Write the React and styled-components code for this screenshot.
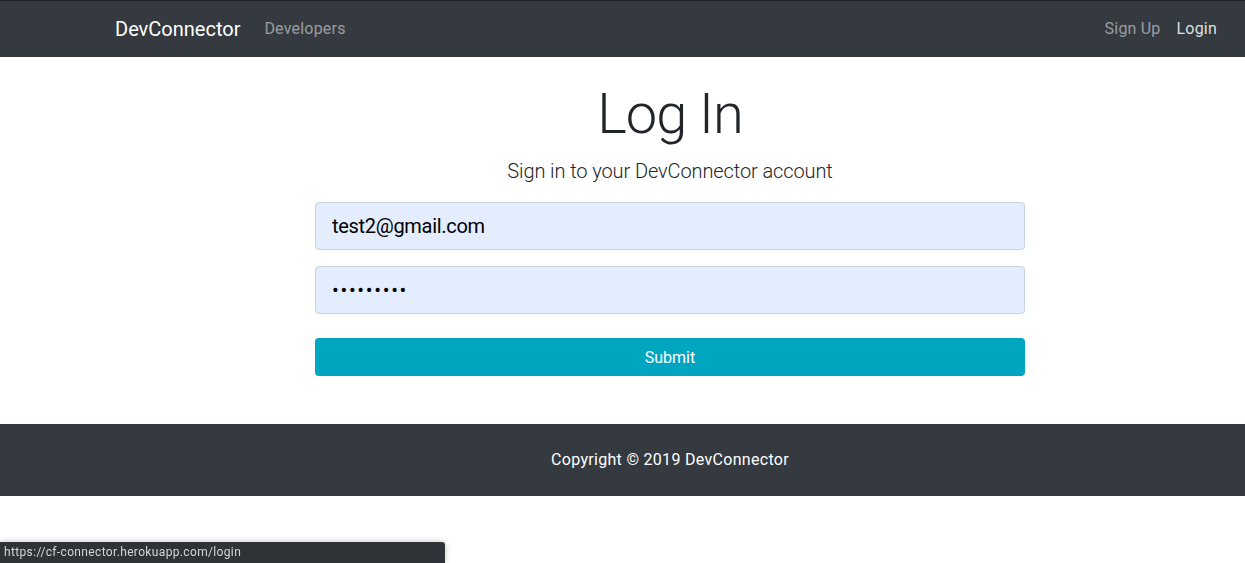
import styled, { createGlobalStyle } from "styled-components";

const Global = createGlobalStyle`
    html, body {
        margin: 0;
        padding: 0;
        overflow: hidden;
        background: #fff;
    }
    body {
        font-family: Roboto, "Noto Sans", "Liberation Sans", sans-serif;
        color: #212529;
        font-size: 16px;
        line-height: 1.5;
    }
`

// the shot is cropped from a wider window, so the bootstrap container sits at 100px
const Container = styled.div`
    width: 1140px;
    margin-left: 100px;
    padding: 0 15px;
    box-sizing: border-box;
`

const Navbar = styled.nav`
    background-color: #343a40;
    border-top: 1px solid #1f2327;
    height: 56px;
    margin-bottom: 24px;
`

const NavInner = styled(Container)`
    display: flex;
    align-items: center;
    height: 100%;
`

const Brand = styled.a`
    color: #fff;
    font-size: 20px;
    margin-right: 16px;
    text-decoration: none;
`

const NavList = styled.div`
    display: flex;
    margin-left: ${({ right }) => (right ? "auto" : "0")};
`

const NavLink = styled.a`
    color: ${({ active }) => (active ? "rgba(255,255,255,0.85)" : "rgba(255,255,255,0.5)")};
    padding: 8px;
    font-size: 16px;
    text-decoration: none;
    letter-spacing: 0.2px;
`

const FormCol = styled.div`
    width: 710px;
    margin: 0 auto;
    text-align: center;
`

const Title = styled.h1`
    font-size: 56px;
    font-weight: 300;
    line-height: 1.2;
    margin: 0 0 8px;
    letter-spacing: -1px;
`

const Lead = styled.p`
    font-size: 20px;
    font-weight: 300;
    line-height: 1.5;
    margin: 0 0 16px;
    letter-spacing: -0.1px;
`

const Input = styled.input`
    display: block;
    width: 100%;
    height: 48px;
    box-sizing: border-box;
    padding: 8px 16px;
    margin-bottom: 16px;
    font-family: inherit;
    font-size: 20px;
    color: #000;
    background: #e4edfd;
    border: 1px solid #cbd3e0;
    border-radius: 4px;
    outline: none;
    letter-spacing: ${({ type }) => (type === "password" ? "1.7px" : "-0.3px")};
`

const Submit = styled.button`
    display: block;
    width: 100%;
    height: 38px;
    margin-top: 24px;
    font-family: inherit;
    font-size: 16px;
    color: #fff;
    background: #00a5c0;
    border: none;
    border-radius: 4px;
`

const Footer = styled.footer`
    margin-top: 48px;
    background: #343a40;
    color: #fff;
    padding: 24px 0;
    font-size: 16px;
`

const FooterText = styled(Container)`
    text-align: center;
    letter-spacing: 0.3px;
`

const StatusBar = styled.div`
    position: fixed;
    left: 0;
    bottom: 0;
    width: 445px;
    height: 21px;
    box-sizing: border-box;
    padding: 2px 4px;
    background: #2f3236;
    color: #d4d6d8;
    font-size: 12px;
    line-height: 17px;
    letter-spacing: 0.35px;
    border-top-right-radius: 3px;
    box-shadow: 0 0 6px rgba(0, 0, 0, 0.25);
`

const App = () => {
    return (
        <>
            <Global />
            <Navbar>
                <NavInner>
                    <Brand href="#">DevConnector</Brand>
                    <NavList>
                        <NavLink href="#">Developers</NavLink>
                    </NavList>
                    <NavList right>
                        <NavLink href="#">Sign Up</NavLink>
                        <NavLink href="#" active>Login</NavLink>
                    </NavList>
                </NavInner>
            </Navbar>
            <Container>
                <FormCol>
                    <Title>Log In</Title>
                    <Lead>Sign in to your DevConnector account</Lead>
                    <form onSubmit={e => e.preventDefault()}>
                        <Input type="email" defaultValue="test2@gmail.com" />
                        <Input type="password" defaultValue="123456789" />
                        <Submit type="submit">Submit</Submit>
                    </form>
                </FormCol>
            </Container>
            <Footer>
                <FooterText>Copyright © 2019 DevConnector</FooterText>
            </Footer>
            <StatusBar>https://cf-connector.herokuapp.com/login</StatusBar>
        </>
    )
}

export default App;
